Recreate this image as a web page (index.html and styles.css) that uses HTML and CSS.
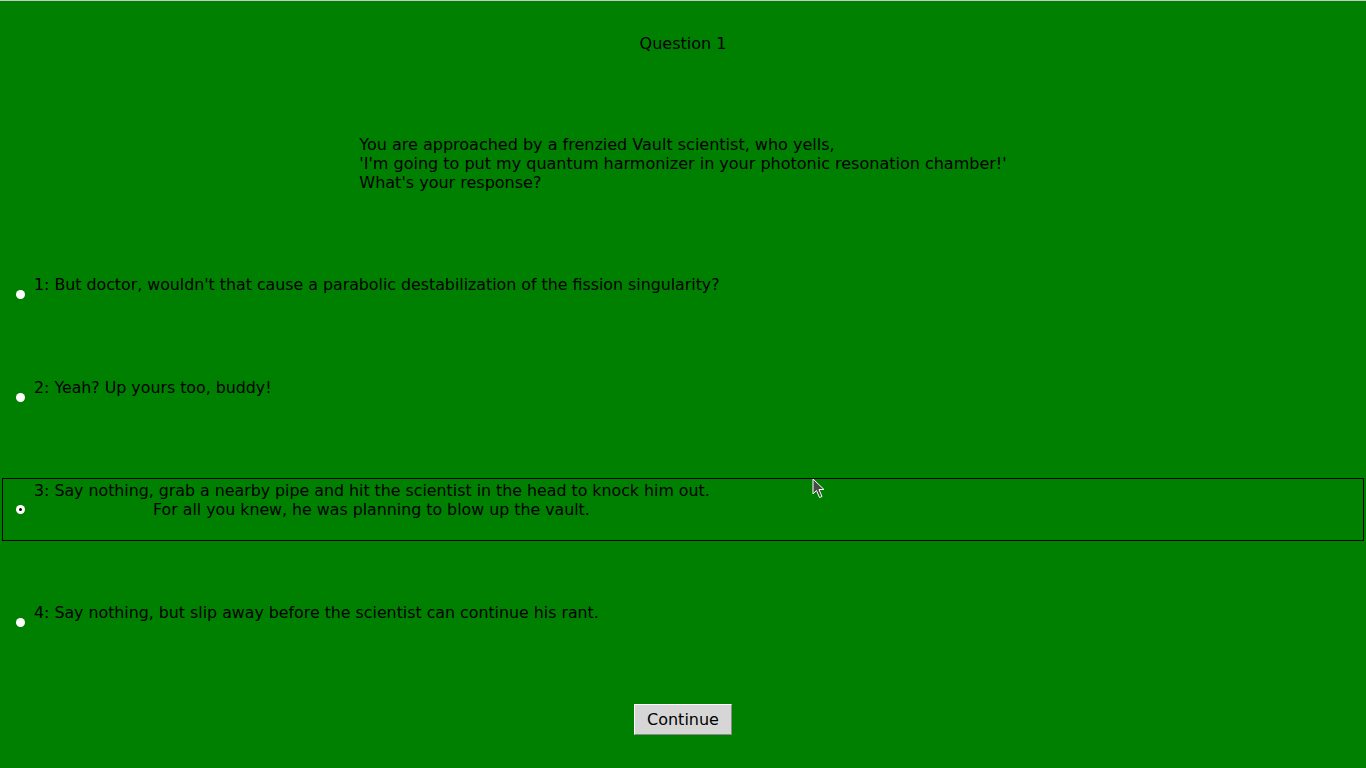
FILE: index.html
```html
<!DOCTYPE html>
<html lang="en">
<head>
<meta charset="utf-8">
<title>Question 1</title>
<link rel="stylesheet" href="styles.css">
</head>
<body>
<div class="page">
  <div class="title">Question 1</div>
  <div class="question-wrap">
    <p class="question">You are approached by a frenzied Vault scientist, who yells,<br>'I'm going to put my quantum harmonizer in your photonic resonation chamber!'<br>What's your response?</p>
  </div>
  <form class="options">
    <label class="option">
      <input type="radio" name="answer" class="radio">
      <span class="text">1: But doctor, wouldn't that cause a parabolic destabilization of the fission singularity?<br>&nbsp;</span>
    </label>
    <label class="option">
      <input type="radio" name="answer" class="radio">
      <span class="text">2: Yeah? Up yours too, buddy!<br>&nbsp;</span>
    </label>
    <label class="option active">
      <input type="radio" name="answer" class="radio" checked>
      <span class="text">3: Say nothing, grab a nearby pipe and hit the scientist in the head to knock him out.<br><span class="indent">For all you knew, he was planning to blow up the vault.</span><br>&nbsp;</span>
    </label>
    <label class="option">
      <input type="radio" name="answer" class="radio">
      <span class="text">4: Say nothing, but slip away before the scientist can continue his rant.<br>&nbsp;</span>
    </label>
  </form>
  <div class="actions">
    <button type="button" class="continue">Continue</button>
  </div>
  <svg class="cursor" width="14" height="22" viewBox="0 0 14 22" aria-hidden="true">
    <path d="M1 1 L1 16 L4.5 12.5 L7.5 19.5 L10 18.5 L7 11.5 L12 11.5 Z" fill="#4a4a4a" stroke="#ffffff" stroke-width="1" stroke-linejoin="miter"/>
  </svg>
</div>
</body>
</html>
```
FILE: styles.css
```css
html, body {
  margin: 0;
  padding: 0;
  background: #008000;
}
body {
  border-top: 1px solid #c8c8c8;
  font-family: "DejaVu Sans", "Liberation Sans", sans-serif;
  font-size: 16px;
  line-height: 19px;
  color: #000;
  min-height: 767px;
}
.page {
  position: relative;
}
.title {
  text-align: center;
  padding-top: 33px;
}
.question-wrap {
  text-align: center;
  margin-top: 82px;
}
.question {
  display: inline-block;
  text-align: left;
  margin: 0;
}
.options {
  display: flex;
  flex-direction: column;
  gap: 59px;
  margin: 80px 2px 0 2px;
}
.option {
  display: flex;
  align-items: center;
  border: 1px solid transparent;
  padding: 2px 0;
}
.option.active {
  border-color: #000;
}
.text {
  font-size: 15.8px;
  line-height: 19px;
}
.radio {
  appearance: none;
  -webkit-appearance: none;
  width: 9px;
  height: 9px;
  margin: 0 9px 0 13px;
  border-radius: 50%;
  background: #fff;
  position: relative;
  flex: none;
}
.radio:checked::after {
  content: "";
  position: absolute;
  left: 3px;
  top: 3px;
  width: 3px;
  height: 3px;
  border-radius: 50%;
  background: #000;
}
.indent {
  padding-left: 119px;
}
.actions {
  text-align: center;
  margin-top: 60px;
}
.continue {
  font-family: "DejaVu Sans", "Liberation Sans", sans-serif;
  font-size: 16px;
  line-height: 19px;
  color: #000;
  background: #d6d6d6;
  border: 1px solid;
  border-color: #ffffff #8a8a8a #8a8a8a #ffffff;
  padding: 5px 12px;
  margin: 0;
}
.cursor {
  position: absolute;
  left: 812px;
  top: 477px;
}
```
